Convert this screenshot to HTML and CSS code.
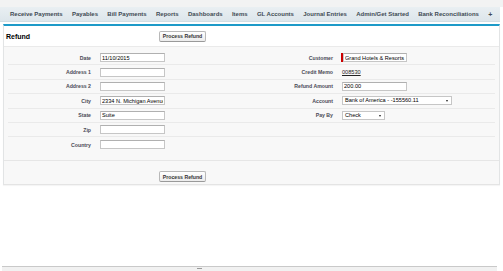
FILE: index.html
```html
<!DOCTYPE html>
<html lang="en">
<head>
    <meta charset="UTF-8">
    <meta name="viewport" content="width=device-width, initial-scale=1.0">
    <title>Refund</title>
    <link rel="stylesheet" href="styles.css">
</head>
<body>
<div class="page">

    <!-- Tab bar -->
    <div class="topstrip"></div>
    <nav class="tabs">
        <span class="tab">Receive Payments</span>
        <span class="tab">Payables</span>
        <span class="tab">Bill Payments</span>
        <span class="tab">Reports</span>
        <span class="tab">Dashboards</span>
        <span class="tab">Items</span>
        <span class="tab">GL Accounts</span>
        <span class="tab">Journal Entries</span>
        <span class="tab">Admin/Get Started</span>
        <span class="tab">Bank Reconciliations</span>
        <span class="tab plus">+</span>
    </nav>

    <!-- Refund block -->
    <div class="panel">
        <div class="panel-head">
            <h2 class="title">Refund</h2>
            <button class="btn">Process Refund</button>
        </div>

        <div class="panel-body">
            <div class="row">
                <label class="label">Date</label>
                <div class="value"><input class="input" type="text" value="11/10/2015"></div>
                <label class="label">Customer</label>
                <div class="value">
                    <span class="required"><input class="input wide" type="text" value="Grand Hotels &amp; Resorts"></span>
                </div>
            </div>
            <div class="row">
                <label class="label">Address 1</label>
                <div class="value"><input class="input" type="text" value=""></div>
                <label class="label">Credit Memo</label>
                <div class="value"><a class="link" href="#">008530</a></div>
            </div>
            <div class="row">
                <label class="label">Address 2</label>
                <div class="value"><input class="input" type="text" value=""></div>
                <label class="label">Refund Amount</label>
                <div class="value"><input class="input" type="text" value="200.00"></div>
            </div>
            <div class="row">
                <label class="label">City</label>
                <div class="value"><input class="input" type="text" value="2334 N. Michigan Avenue"></div>
                <label class="label">Account</label>
                <div class="value"><div class="select account">Bank of America - -155560.11<span class="caret"></span></div></div>
            </div>
            <div class="row">
                <label class="label">State</label>
                <div class="value"><input class="input" type="text" value="Suite"></div>
                <label class="label">Pay By</label>
                <div class="value"><div class="select payby">Check<span class="caret"></span></div></div>
            </div>
            <div class="row">
                <label class="label">Zip</label>
                <div class="value"><input class="input" type="text" value=""></div>
                <span class="label"></span>
                <div class="value"></div>
            </div>
            <div class="row">
                <label class="label">Country</label>
                <div class="value"><input class="input" type="text" value=""></div>
                <span class="label"></span>
                <div class="value"></div>
            </div>
        </div>

        <div class="panel-foot">
            <button class="btn">Process Refund</button>
        </div>
    </div>

    <!-- bottom scroll strip -->
    <div class="statusbar"><span class="grip"></span></div>
</div>
</body>
</html>
```

FILE: styles.css
```css
* {
    box-sizing: border-box;
}
body {
    margin: 0;
    background: #fff;
    font-family: "Liberation Sans", Arial, sans-serif;
    color: #000;
}
.page {
    display: flex;
    flex-direction: column;
    height: 100vh;
}

/* tabs */
.topstrip {
    height: 7px;
    background: #f2f3f3;
}
.tabs {
    display: flex;
    align-items: center;
    gap: 9.3px;
    height: 15px;
    margin-right: 3px;
    padding-left: 10px;
    background: linear-gradient(#e9eff2, #dde6eb);
    border-bottom: 1px solid #d2dde3;
}
.tab {
    font-size: 6px;
    font-weight: bold;
    color: #3f4a54;
    white-space: nowrap;
}
.tab.plus {
    font-size: 7px;
}

/* panel */
.panel {
    margin: 2px 3px 0 3px;
    border-top: 2px solid #1d9ac8;
    border-left: 1px solid #e2e4e5;
    border-right: 1px solid #e2e4e5;
    border-bottom: 1px solid #e4e4e4;
    background: #f8f8f8;
    box-shadow: 0 1px 1px rgba(0, 0, 0, 0.04);
}
.panel-head {
    display: flex;
    align-items: center;
    height: 21px;
    background: #fff;
    border-bottom: 1px solid #eaeaea;
}
.title {
    width: 155px;
    margin: 0;
    padding-left: 2px;
    font-size: 7px;
    font-weight: bold;
    color: #000;
}
.btn {
    height: 11px;
    width: 47px;
    padding: 0;
    font-family: "Liberation Sans", Arial, sans-serif;
    font-size: 5.2px;
    font-weight: bold;
    color: #333;
    background: linear-gradient(#fff, #ececec);
    border: 1px solid #b8b8b8;
    border-bottom-color: #9a9a9a;
    border-radius: 2px;
}

.panel-body {
    padding: 4px 4px 8px 4px;
}
.row {
    display: grid;
    grid-template-columns: 88px 150px 92px 1fr;
    align-items: center;
    height: 14.4px;
    border-bottom: 1px solid #eaeaea;
}
.row:last-child {
    border-bottom: none;
}
.label {
    padding-right: 5px;
    text-align: right;
    font-size: 5.2px;
    font-weight: bold;
    color: #4a4a56;
}
.value {
    display: flex;
    align-items: center;
    padding-left: 4px;
    font-size: 5.6px;
}
.input {
    width: 65px;
    height: 9px;
    padding: 0 1px;
    border: 1px solid #c6c6c6;
    border-top-color: #b0b0b0;
    background: #fff;
    font-family: "Liberation Sans", Arial, sans-serif;
    font-size: 5.6px;
    color: #000;
    outline: none;
}
.required {
    display: flex;
    margin-left: -1px;
    border-left: 2px solid #c00;
}
.input.wide {
    width: 64px;
}
.link {
    color: #222;
    text-decoration: underline;
}
.select {
    position: relative;
    height: 9px;
    padding-left: 2px;
    line-height: 7px;
    border: 1px solid #c6c6c6;
    background: #fff;
    white-space: nowrap;
}
.select.account {
    width: 110px;
}
.select.payby {
    width: 43px;
}
.caret {
    position: absolute;
    right: 3px;
    top: 3px;
    border-left: 1.5px solid transparent;
    border-right: 1.5px solid transparent;
    border-top: 2px solid #222;
}

.panel-foot {
    padding: 4px 0 1px 155px;
    border-top: 1px solid #e6e6e6;
}

/* bottom strip */
.statusbar {
    position: relative;
    margin: auto 6px 0 2px;
    height: 5px;
    border-top: 1px solid #c9c9c9;
    background: #f1f1f1;
}
.grip {
    position: absolute;
    left: 195px;
    top: 1px;
    width: 5px;
    height: 1px;
    background: #9a9a9a;
}
```
